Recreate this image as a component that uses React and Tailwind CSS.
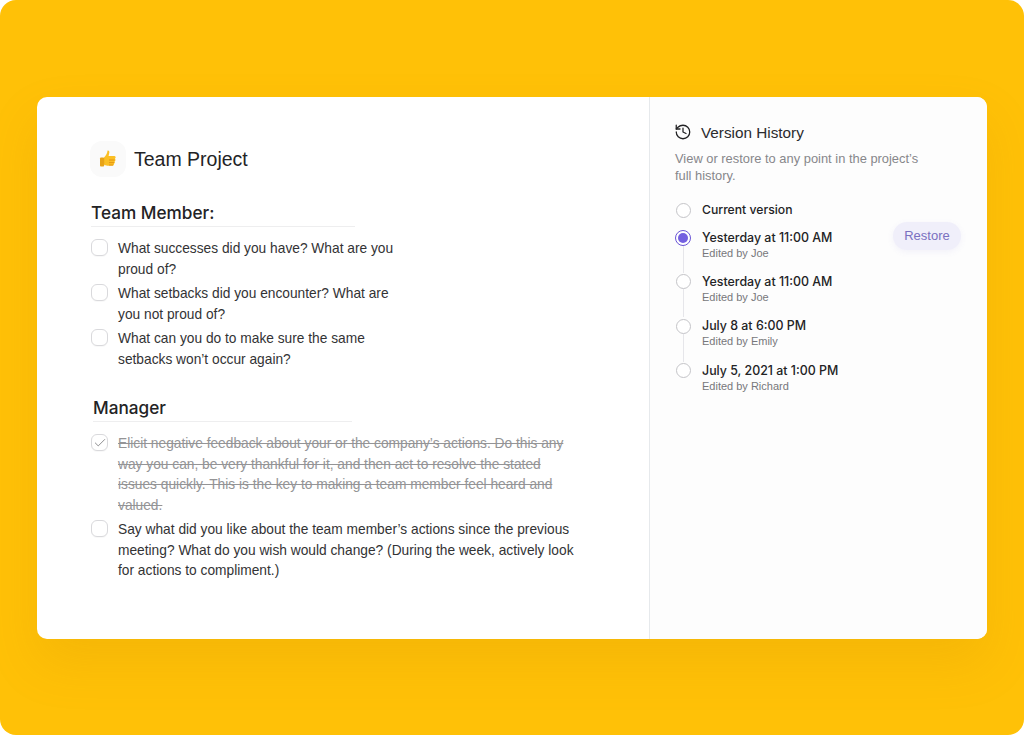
import React from "react";
import { History, Check } from "lucide-react";

const sans = "font-['Liberation_Sans',Arial,sans-serif]";

function Box({ checked }) {
  return (
    <span className="w-[17px] h-[17px] shrink-0 rounded-[6px] border border-[#d9d9dc] bg-white flex items-center justify-center shadow-[0_1px_1px_rgba(0,0,0,0.03)]">
      {checked && <Check size={14} strokeWidth={1.3} className="text-[#6b6b6e]" />}
    </span>
  );
}

function Task({ children, checked, cls }) {
  return (
    <div className={"flex gap-[10px] " + (cls || "")}>
      <div className="pt-[1px]"><Box checked={checked} /></div>
      <p className={"font-['Liberation_Sans',Arial,sans-serif] pt-[1px] -mb-[1px] text-[13.75px] leading-[20.5px] " + (checked ? "line-through text-[#949496]" : "text-[#333335]")}>{children}</p>
    </div>
  );
}

function Version({ title, by, active, last, button }) {
  return (
    <div className={"flex " + (last ? "" : "h-[44.4px]")}>
      <div className="w-[27px] shrink-0 flex flex-col items-start">
        {active ? (
          <span className="w-[16px] h-[16px] mt-[1px] shrink-0 rounded-full border-[1.5px] border-[#6a55d6] flex items-center justify-center bg-white">
            <span className="w-[10px] h-[10px] rounded-full bg-[#7460e0]" />
          </span>
        ) : (
          <span className="w-[15px] h-[15px] ml-[0.5px] mt-[1.5px] shrink-0 rounded-full border-[1.5px] border-[#c4c4c8] bg-white" />
        )}
        {!last && <span className="w-[1px] grow ml-[7.5px] bg-[#e6e6ea]" />}
      </div>
      <div className="grow">
        <div className="text-[12.4px] leading-[17px] font-medium text-[#232325]">{title}</div>
        <div className="font-['Liberation_Sans',Arial,sans-serif] text-[11px] leading-[14px] text-[#77777b]">{by}</div>
      </div>
      {button && (
        <div className="font-['Liberation_Sans',Arial,sans-serif] mr-[26px] -mt-[7px] h-[28px] w-[68px] rounded-full bg-[#f0effa] text-[#7a70c0] text-[13px] flex items-center justify-center shadow-[0_2px_6px_rgba(110,100,200,0.08)]">
          Restore
        </div>
      )}
    </div>
  );
}

export default function App() {
  return (
    <div className="w-[1024px] h-[735px] bg-white font-['Inter','Liberation_Sans',sans-serif]">
      <div className="w-full h-full rounded-[16px] bg-[#ffc107] pl-[37px] pt-[97px]">
        <div className="w-[950px] h-[542px] flex rounded-[10px] overflow-hidden bg-white shadow-[0_24px_50px_rgba(190,130,0,0.16)]">
          <div className="w-[612px] shrink-0 pl-[53px] pt-[44px]">
            <div className="flex items-center gap-[8px]">
              <span className="w-[36px] h-[36px] rounded-[12px] bg-[#fafafa] flex items-center justify-center">
                <svg width="20" height="20" viewBox="0 0 20 20">
                  <path d="M9.6 1.5c1.4-.3 2 1 1.7 2.3l-.7 3.2h5.6c1.7 0 1.9 2.2.7 2.7 1 .7.8 2.2-.3 2.6.7.8.3 2.1-.7 2.4.3 1-.4 2-1.5 2H9.5c-1.6 0-2.8-.7-3.5-1.2V8.6c1.6-1.6 3-3.4 3.6-7.1z" fill="#fbbf24" />
                  <path d="M11 11h5.6M11 13.6h5M11 16h4" stroke="#e08c10" strokeWidth="0.8" fill="none" />
                  <rect x="2" y="8.5" width="4.2" height="9" rx="1" fill="#e8a317" />
                </svg>
              </span>
              <h1 className="font-['Liberation_Sans',Arial,sans-serif] text-[19.5px] leading-[28px] text-[#232325]">Team Project</h1>
            </div>

            <h2 className="mt-[23px] ml-[1px] text-[17.2px] leading-[25px] font-medium text-[#232325]">Team Member:</h2>
            <div className="ml-[1px] mt-[1px] w-[264px] h-[1px] bg-[#eeeeef]" />
            <div className="ml-[1px] mt-[11px] w-[310px]">
              <Task>What successes did you have? What are you proud of?</Task>
              <Task cls="mt-[4px]">What setbacks did you encounter? What are you not proud of?</Task>
              <Task cls="mt-[4px]">What can you do to make sure the same setbacks won’t occur again?</Task>
            </div>

            <h2 className="mt-[26px] ml-[3px] text-[17.2px] leading-[25px] font-medium text-[#232325]">Manager</h2>
            <div className="ml-[3px] mt-[1px] w-[259px] h-[1px] bg-[#eeeeef]" />
            <div className="ml-[1px] mt-[11px] w-[490px]">
              <Task checked>Elicit negative feedback about your or the company’s actions. Do this any way you can, be very thankful for it, and then act to resolve the stated issues quickly. This is the key to making a team member feel heard and valued.</Task>
              <Task cls="mt-[4px]">Say what did you like about the team member’s actions since the previous meeting? What do you wish would change? (During the week, actively look for actions to compliment.)</Task>
            </div>
          </div>

          <div className="grow border-l border-[#e6e9ec] bg-[#fdfdfd] pl-[25px] pt-[26px]">
            <div className="flex items-center gap-[9px] h-[20px]">
              <History size={18} strokeWidth={1.7} className="text-[#232325] -mt-[2px] -ml-[1px]" />
              <h2 className={sans + " text-[15.3px] text-[#2b2b2d]"}>Version History</h2>
            </div>
            <p className={sans + " mt-[8px] w-[250px] text-[12.9px] leading-[16.5px] text-[#87878b]"}>View or restore to any point in the project’s full history.</p>
            <div className="mt-[17px] h-[27.5px] flex">
              <span className="ml-[0.5px] w-[15px] h-[15px] mt-[1.5px] rounded-full border-[1.5px] border-[#c4c4c8] bg-white" />
              <span className="ml-[11.5px] text-[12.2px] leading-[17px] font-medium text-[#232325]">Current version</span>
            </div>
            <Version title="Yesterday at 11:00 AM" by="Edited by Joe" active button />
            <Version title="Yesterday at 11:00 AM" by="Edited by Joe" />
            <Version title="July 8 at 6:00 PM" by="Edited by Emily" />
            <Version title="July 5, 2021 at 1:00 PM" by="Edited by Richard" last />
          </div>
        </div>
      </div>
    </div>
  );
}
